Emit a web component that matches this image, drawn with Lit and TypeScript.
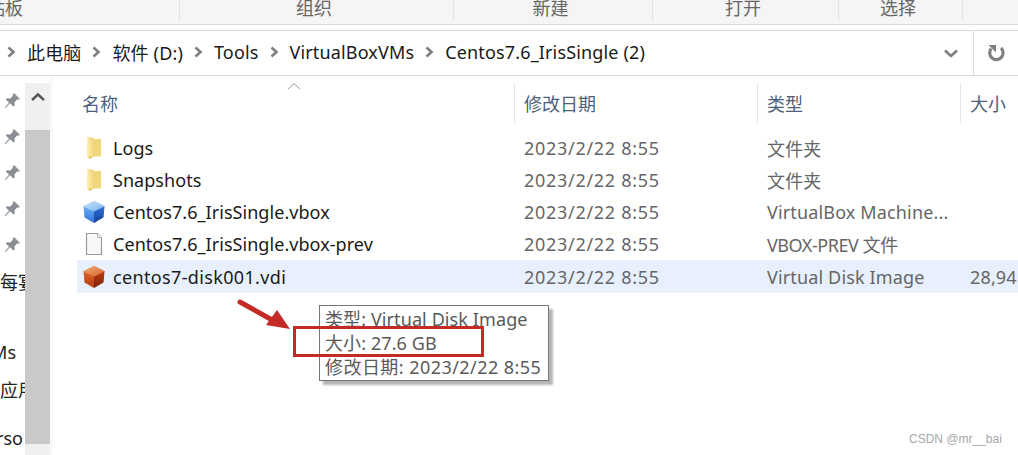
import { LitElement, html, css, svg } from 'lit'
import { customElement } from 'lit/decorators.js'

const pin = svg`<svg class="pin" width="18" height="18" viewBox="0 0 18 18"><path d="M11 1l6 6-1.500.8-1-.6-3 3 .2 3.200-1.200 1.200-3.400-3.400L2.500 16l-.8-.6 4.300-4.700L2.800 7.500 4 6.300l3.200.2 3-3-.6-1z" fill="#8a8e94"/></svg>`

const chevron = html`<svg class="crumb-sep" width="9" height="12" viewBox="0 0 9 12"><path d="M1.500 1.500L6.500 6l-5 4.500" fill="none" stroke="#7f7f7f" stroke-width="2.600"/></svg>`

const folder = html`<svg width="22" height="24" viewBox="0 0 22 24"><defs><linearGradient id="fd" x1="0" x2="1"><stop offset="0" stop-color="#fbeeb4"/><stop offset="1" stop-color="#f2d77e"/></linearGradient></defs><path d="M4 1.500h6l1 1.500h7v17.500h-8z" fill="#f1d67c"/><path d="M4 1.500l6.500 3.500v15.500L6 23l-2-1.500z" fill="url(#fd)"/><path d="M6 23v-3l4.500.5z" fill="#e6c768"/></svg>`

const cube = (id: string, c: string[]) => svg`<svg width="22" height="24" viewBox="0 0 22 24">
  <defs>
    <linearGradient id="${id}t" x1="0" x2="1" y1="0" y2="1"><stop offset="0" stop-color="${c[0]}"/><stop offset="1" stop-color="${c[1]}"/></linearGradient>
    <linearGradient id="${id}l" x1="0" x2="0" y1="0" y2="1"><stop offset="0" stop-color="${c[1]}"/><stop offset="1" stop-color="${c[2]}"/></linearGradient>
    <linearGradient id="${id}r" x1="0" x2="0" y1="0" y2="1"><stop offset="0" stop-color="${c[2]}"/><stop offset="1" stop-color="${c[3]}"/></linearGradient>
  </defs>
  <path d="M11 1.200L21.500 6.500 11 11.500 .5 6.500z" fill="url(#${id}t)" stroke="url(#${id}t)" stroke-linejoin="round"/>
  <path d="M.5 6.500L11 11.500 11 23 1.500 17.500z" fill="url(#${id}l)"/>
  <path d="M21.500 6.500L11 11.500 11 23 20.500 17.500z" fill="url(#${id}r)"/>
</svg>`

const blueCube = cube('bc', ['#cfe6fb', '#6fb0f2', '#2f72d8', '#163f9a'])
const redCube = cube('rc', ['#f0a878', '#d9642a', '#b83c10', '#7d2206'])

const fileIcon = html`<svg width="22" height="24" viewBox="0 0 22 24"><path d="M3.500 1.500h11l4 4v17h-15z" fill="#f8f8f8" stroke="#9a9a9a" stroke-width="1.200"/><path d="M14.500 1.500v4h4" fill="#fff" stroke="#b5b5b5"/></svg>`

const files = [
  { icon: folder, name: 'Logs', type: '文件夹', size: '' },
  { icon: folder, name: 'Snapshots', type: '文件夹', size: '' },
  { icon: blueCube, name: 'Centos7.6_IrisSingle.vbox', type: 'VirtualBox Machine...', size: '' },
  { icon: fileIcon, name: 'Centos7.6_IrisSingle.vbox-prev', type: 'VBOX-PREV 文件', size: '', tight: true },
  { icon: redCube, name: 'centos7-disk001.vdi', type: 'Virtual Disk Image', size: '28,94', selected: true },
]

@customElement('app-root')
export class AppRoot extends LitElement {
  static styles = css`
    :host {
      display: block;
      position: relative;
      width: 1018px;
      height: 455px;
      overflow: hidden;
      background: #fff;
      font-family: "Noto Sans", "Noto Sans CJK SC", sans-serif;
      font-size: 18px;
      color: #1a1a1a;
    }
    .ribbon {
      display: grid;
      grid-template-columns: 180px 274px 199px 186px 124px 1fr;
      height: 24px;
      background: #f5f5f5;
      border-bottom: 1px solid #dadada;
      color: #666;
      font-size: 18px;
      line-height: 17px;
      overflow: hidden;
    }
    .group {
      height: 21px;
      border-right: 1px solid #e2e2e2;
      padding-right: 5px;
      text-align: center;
      overflow: hidden;
    }
    .group:last-child { border-right: 0; }
    .group.clip { text-align: left; margin-left: -31px; padding-right: 0; }
    .address {
      display: flex;
      align-items: center;
      height: 44px;
      margin-top: 5px;
      border-top: 1px solid #dcdcdc;
      border-bottom: 1px solid #dcdcdc;
    }
    .crumbs {
      display: flex;
      align-items: center;
      gap: 11px;
      flex: 1;
      padding: 0 0 3px 7px;
      letter-spacing: .15px;
    }
    .drop { width: 36px; display: flex; justify-content: center; margin-right: 4px; }
    .refresh {
      width: 44px;
      height: 44px;
      border-left: 1px solid #dcdcdc;
      display: flex;
      align-items: center;
      justify-content: center;
    }
    .main { display: flex; height: 379px; }
    .nav {
      width: 25px;
      padding-top: 7px;
      overflow: hidden;
      flex: none;
    }
    .nav-item {
      height: 36px;
      display: flex;
      align-items: center;
      white-space: nowrap;
      font-size: 18px;
      color: #222;
      padding-bottom: 1px;
      box-sizing: border-box;
    }
    .nav-item.pinned { padding: 0 0 0 3px; }
    .nav-item.tail { justify-content: flex-end; padding-right: 9px; padding-bottom: 2px; }
    .nav-item.end { margin-top: 13px; justify-content: flex-end; padding-right: 2px; }
    .scrollbar {
      width: 25px;
      flex: none;
      margin-top: 7px;
      background: #f0f0f0;
      display: flex;
      flex-direction: column;
    }
    .up { height: 47px; display: flex; justify-content: center; padding-top: 9px; box-sizing: border-box; }
    .thumb { height: 314px; background: #c9c9c9; }
    .gutter { width: 3px; flex: none; background: #f9f9f9; }
    .list { flex: 1; padding: 7px 0 0 24px; position: relative; min-width: 0; }
    .head, .row {
      display: grid;
      grid-template-columns: 437px 243px 203px 1fr;
    }
    .head {
      height: 40px;
      margin-bottom: 9px;
      color: #4d5f7c;
      font-size: 18px;
    }
    .head > div {
      height: 40px;
      padding: 1px 0 0 9px;
      line-height: 40px;
      box-sizing: border-box;
      border-left: 1px solid #e5e5e5;
      white-space: nowrap;
    }
    .head > div:first-child { border-left: 0; padding-left: 5px; }
    .caret { position: absolute; left: 234px; top: 6px; }
    .row { height: 32px; align-items: center; white-space: nowrap; }
    .row.selected { background: #e8f0fd; height: 33px; }
    .name { display: flex; align-items: center; gap: 8px; padding-left: 6px; letter-spacing: .05px; }
    .name svg { flex: none; }
    .selected .name { letter-spacing: .35px; }
    .cell { padding-left: 10px; color: #666; overflow: hidden; letter-spacing: .15px; }
    .cell.date { letter-spacing: .7px; }
    .cell.tight { letter-spacing: -.45px; }
    .tip {
      position: absolute;
      left: 319px;
      top: 305px;
      width: 230px;
      height: 76px;
      box-sizing: border-box;
      border: 1px solid #767676;
      background: #fff;
      box-shadow: 4px 4px 2px #b5b5b5;
      padding: 1px 0 0 5px;
      color: #5a5a5a;
      font-size: 18px;
      line-height: 24px;
      letter-spacing: .1px;
      white-space: nowrap;
    }
    .tip .date { letter-spacing: .45px; }
    .mark {
      position: absolute;
      left: 293px;
      top: 326px;
      width: 191px;
      height: 31px;
      box-sizing: border-box;
      border: 3px solid #c42b27;
    }
    .arrow { position: absolute; left: 230px; top: 292px; }
    .watermark {
      position: absolute;
      left: 909px;
      top: 432px;
      font-family: "Liberation Sans", sans-serif;
      font-size: 12px;
      color: #a8a8a8;
    }
  `

  render() {
    return html`
      <div class="ribbon">
        <div class="group clip">剪贴板</div>
        <div class="group">组织</div>
        <div class="group">新建</div>
        <div class="group">打开</div>
        <div class="group">选择</div>
        <div class="group"></div>
      </div>
      <div class="address">
        <div class="crumbs">
          ${chevron}<span>此电脑</span>
          ${chevron}<span>软件 (D:)</span>
          ${chevron}<span>Tools</span>
          ${chevron}<span>VirtualBoxVMs</span>
          ${chevron}<span>Centos7.6_IrisSingle (2)</span>
        </div>
        <div class="drop">
          <svg width="14" height="9" viewBox="0 0 14 9"><path d="M1 1.500l6 5.500 6-5.500" fill="none" stroke="#7f7f7f" stroke-width="2.600"/></svg>
        </div>
        <div class="refresh">
          <svg width="22" height="22" viewBox="0 0 22 22"><path d="M16 6a6.700 6.700 0 1 1-9.800 .6" fill="none" stroke="#808080" stroke-width="3.200"/><path d="M3.500 3h7.500v7.500z" fill="#808080"/></svg>
        </div>
      </div>
      <div class="main">
        <div class="nav">
          ${[0, 1, 2, 3, 4].map(() => html`<div class="nav-item pinned">${pin}</div>`)}
          <div class="nav-item">每宴</div>
          <div class="nav-item"></div>
          <div class="nav-item tail">VMs</div>
          <div class="nav-item">应用</div>
          <div class="nav-item end">erso</div>
        </div>
        <div class="scrollbar">
          <div class="up">
            <svg width="14" height="10" viewBox="0 0 14 10"><path d="M1 8l6-5.500L13 8" fill="none" stroke="#555" stroke-width="2.400"/></svg>
          </div>
          <div class="thumb"></div>
        </div>
        <div class="gutter"></div>
        <div class="list">
          <svg class="caret" width="14" height="8" viewBox="0 0 14 8"><path d="M1 7l6-5.500L13 7" fill="none" stroke="#9a9a9a"/></svg>
          <div class="head">
            <div>名称</div>
            <div>修改日期</div>
            <div>类型</div>
            <div>大小</div>
          </div>
          ${files.map(f => html`
            <div class="row ${f.selected ? 'selected' : ''}">
              <div class="name">${f.icon}<span>${f.name}</span></div>
              <div class="cell date">2023/2/22 8:55</div>
              <div class="cell ${f.tight ? 'tight' : ''}">${f.type}</div>
              <div class="cell">${f.size}</div>
            </div>
          `)}
        </div>
      </div>
      <div class="tip">
        <div>类型: Virtual Disk Image</div>
        <div>大小: 27.6 GB</div>
        <div class="date">修改日期: 2023/2/22 8:55</div>
      </div>
      <div class="mark"></div>
      <svg class="arrow" width="66" height="44" viewBox="0 0 66 44">
        <path d="M10 10L44 29" stroke="#c42b27" stroke-width="5" stroke-linecap="round"/>
        <path d="M60 37L36 33 47 18z" fill="#c42b27"/>
      </svg>
      <div class="watermark">CSDN @mr__bai</div>
    `
  }
}
